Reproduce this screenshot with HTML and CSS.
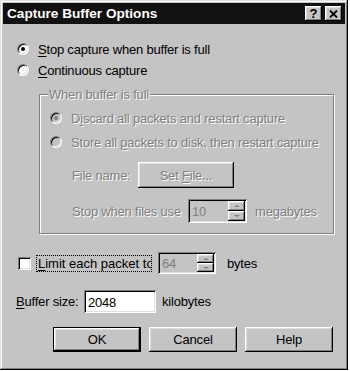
FILE: index.html
```html
<!DOCTYPE html>
<html lang="en">
<head>
    <meta charset="UTF-8">
    <title>Capture Buffer Options</title>
    <link rel="stylesheet" href="styles.css">
</head>
<body>
    <div class="window">
        <div class="titlebar">
            <span class="title">Capture Buffer Options</span>
            <div class="title-buttons">
                <div class="tbtn">?</div>
                <div class="tbtn">
                    <svg width="9" height="8" viewBox="0 0 9 8">
                        <path d="M1 0.5 L8 7.5 M8 0.5 L1 7.5" stroke="#000" stroke-width="1.8" fill="none"/>
                    </svg>
                </div>
            </div>
        </div>

        <div class="content">
            <div class="row">
                <span class="radio checked"></span>
                <span><u>S</u>top capture when buffer is full</span>
            </div>
            <div class="row">
                <span class="radio"></span>
                <span><u>C</u>ontinuous capture</span>
            </div>

            <fieldset class="group">
                <legend class="dis">When buffer is full</legend>
                <div class="row row-discard">
                    <span class="radio disabled checked"></span>
                    <span class="dis">D<u>i</u>scard all packets and restart capture</span>
                </div>
                <div class="row row-store">
                    <span class="radio disabled"></span>
                    <span class="dis">Store all <u>p</u>ackets to disk, then restart capture</span>
                </div>
                <div class="row row-file">
                    <span class="label-file dis">File name:</span>
                    <div class="btn btn-file"><span class="dis">Set <u>F</u>ile...</span></div>
                </div>
                <div class="row row-stop">
                    <span class="label-stop dis">Stop when files use</span>
                    <div class="spin spin-mb">
                        <span class="spin-val">10</span>
                        <div class="spin-btns">
                            <div class="spin-btn"><span class="arrow up"></span></div>
                            <div class="spin-btn"><span class="arrow down"></span></div>
                        </div>
                    </div>
                    <span class="unit dis">megabytes</span>
                </div>
            </fieldset>

            <div class="row row-limit">
                <span class="checkbox"></span>
                <span class="focus"><u>L</u>imit each packet to</span>
                <div class="spin spin-bytes">
                    <span class="spin-val">64</span>
                    <div class="spin-btns">
                        <div class="spin-btn"><span class="arrow up"></span></div>
                        <div class="spin-btn"><span class="arrow down"></span></div>
                    </div>
                </div>
                <span class="unit-bytes">bytes</span>
            </div>

            <div class="row row-buffer">
                <span class="label-buffer"><u>B</u>uffer size:</span>
                <div class="textbox">2048</div>
                <span class="unit-kb">kilobytes</span>
            </div>

            <div class="actions">
                <div class="btn btn-default">OK</div>
                <div class="btn">Cancel</div>
                <div class="btn">Help</div>
            </div>
        </div>
    </div>
</body>
</html>
```

FILE: styles.css
```css
body {
    margin: 0;
    background: #fff;
    font-family: "Liberation Sans", Arial, sans-serif;
    font-size: 13px;
    letter-spacing: -0.2px;
    line-height: 15px;
    color: #000;
}
u {
    text-decoration-thickness: 1px;
    text-underline-offset: 2px;
}
.window {
    width: 348px;
    height: 370px;
    box-sizing: border-box;
    padding: 3px;
    background: #c4c4c4;
    box-shadow: inset -1px -1px #000, inset 1px 1px #dfdfdf, inset -2px -2px #808080, inset 2px 2px #fff;
}
.titlebar {
    height: 21px;
    background: #111;
    display: flex;
    align-items: center;
    justify-content: space-between;
    padding: 0 3px 0 4px;
}
.title {
    color: #fff;
    font-weight: bold;
    font-size: 13.6px;
    letter-spacing: 0;
}
.title-buttons {
    display: flex;
    gap: 3px;
}
.tbtn {
    width: 17px;
    height: 15px;
    background: #c4c4c4;
    box-shadow: inset -1px -1px #000, inset 1px 1px #fff, inset -2px -2px #808080, inset 2px 2px #dfdfdf;
    display: flex;
    align-items: center;
    justify-content: center;
    font-weight: bold;
    font-size: 13px;
    letter-spacing: 0;
}
.content {
    padding: 15px 12px 0 14px;
}
.row {
    height: 20px;
    display: flex;
    align-items: center;
    white-space: nowrap;
}
.row + .row {
    margin-top: 1px;
}
.dis {
    color: #808080;
    text-shadow: 1px 1px 0 #fff;
}
.dis u {
    text-decoration-color: #808080;
}

/* radio and checkbox */
.radio {
    position: relative;
    width: 12px;
    height: 12px;
    box-sizing: border-box;
    border-radius: 50%;
    border: 1px solid;
    border-color: #808080 #fff #fff #808080;
    box-shadow: inset 1px 1px #000, inset -1px -1px #dfdfdf;
    background: #fff;
    margin-right: 9px;
    flex: none;
}
.radio.checked::after {
    content: '';
    position: absolute;
    left: 3px;
    top: 3px;
    width: 4px;
    height: 4px;
    border-radius: 50%;
    background: #000;
}
.radio.disabled {
    background: #c4c4c4;
}
.radio.disabled.checked::after {
    background: #808080;
}
.checkbox {
    width: 13px;
    height: 13px;
    box-sizing: border-box;
    margin-left: 1px;
    background: #fff;
    box-shadow: inset 1px 1px #808080, inset -1px -1px #fff, inset 2px 2px #000, inset -2px -2px #dfdfdf;
    flex: none;
}

/* group box */
.group {
    margin: 7px 0 0 22px;
    width: 295px;
    box-sizing: border-box;
    padding: 0 0 10px 10px;
    border: 1px solid #808080;
    box-shadow: inset 1px 1px 0 #fff, 1px 1px 0 #fff;
    min-inline-size: 0;
}
.group legend {
    padding: 0 1px;
    margin-left: -2px;
    background: #c4c4c4;
}
.group .row-discard {
    margin-top: 6px;
}
.group .row-store {
    margin-top: 4px;
}
.group .row-file {
    height: 26px;
    margin-top: 10px;
    padding-left: 22px;
}
.label-file {
    width: 66px;
}
.group .row-stop {
    height: 24px;
    margin-top: 11px;
    padding-left: 22px;
}
.label-stop {
    width: 116px;
}
.unit {
    margin-left: 8px;
}

/* buttons */
.btn {
    width: 88px;
    height: 25px;
    box-sizing: border-box;
    background: #c4c4c4;
    box-shadow: inset -1px -1px #000, inset 1px 1px #fff, inset -2px -2px #808080, inset 2px 2px #dfdfdf;
    display: flex;
    align-items: center;
    justify-content: center;
}
.btn-file {
    width: 96px;
    height: 26px;
}
.btn-default {
    border: 1px solid #000;
}
.actions {
    display: flex;
    justify-content: flex-end;
    gap: 8px;
    margin-top: 14px;
}

/* spin boxes and text box */
.spin {
    display: flex;
    width: 59px;
    height: 24px;
    box-sizing: border-box;
    padding: 2px;
    background: #c4c4c4;
    box-shadow: inset 1px 1px #808080, inset -1px -1px #fff, inset 2px 2px #000, inset -2px -2px #dfdfdf;
}
.spin-bytes {
    width: 58px;
    height: 22px;
    margin-left: 6px;
}
.spin-val {
    flex: 1;
    color: #808080;
    padding-left: 2px;
    display: flex;
    align-items: center;
}
.spin-btns {
    width: 17px;
    display: flex;
    flex-direction: column;
}
.spin-btn {
    flex: 1;
    box-shadow: inset -1px -1px #000, inset 1px 1px #fff, inset -2px -2px #808080, inset 2px 2px #dfdfdf;
    display: flex;
    align-items: center;
    justify-content: center;
}
.arrow {
    width: 0;
    height: 0;
    border-left: 3px solid transparent;
    border-right: 3px solid transparent;
}
.arrow.up {
    border-bottom: 2px solid #808080;
}
.arrow.down {
    border-top: 2px solid #808080;
}
.textbox {
    width: 72px;
    height: 23px;
    box-sizing: border-box;
    padding: 2px 4px 0;
    background: #fff;
    box-shadow: inset 1px 1px #808080, inset -1px -1px #fff, inset 2px 2px #000, inset -2px -2px #dfdfdf;
    display: flex;
    align-items: center;
}

.focus {
    width: 112px;
    overflow: hidden;
    margin-left: 5px;
    padding: 0 1px;
    border: 1px dotted #000;
    line-height: 15px;
    letter-spacing: 0;
}
.unit-bytes {
    margin-left: 11px;
}
.row-limit {
    height: 22px;
}
.row-buffer {
    height: 23px;
}
.row + .row-limit {
    margin-top: 18px;
}
.group + .row-limit {
    margin-top: 18px;
}
.row + .row-buffer {
    margin-top: 16px;
}
.label-buffer {
    width: 68px;
    margin-left: -1px;
}
.unit-kb {
    margin-left: 6px;
}
```
